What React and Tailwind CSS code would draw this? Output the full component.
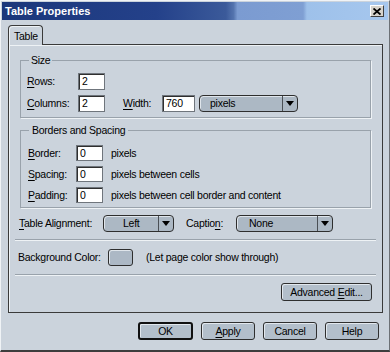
const U = ({ children }) => <span className="underline underline-offset-[2px]">{children}</span>;

const Input = ({ value, w = 'w-[27px]', h = 'h-[17px]' }) => (
  <div
    className={`${w} ${h} bg-white border border-[#6f757c] shadow-[inset_1px_1px_0_#2f2f2f] pl-[3px] flex items-center`}
  >
    {value}
  </div>
);

const Select = ({ value, w, pl }) => (
  <div
    className={`${w} h-[17px] flex rounded-[4px] border border-[#2e2e2e] bg-[#acb8c4] shadow-[inset_1px_1px_0_#dfe5eb]`}
  >
    <div className={`flex-1 flex items-center ${pl}`}>{value}</div>
    <div className="w-[15px] border-l border-[#4a4f55] flex items-center justify-center">
      <div className="w-0 h-0 border-x-[4px] border-x-transparent border-t-[5px] border-t-black" />
    </div>
  </div>
);

const Button = ({ children, w = 'w-[54px]', primary }) => (
  <div
    className={`${w} h-[18px] flex items-center justify-center rounded-[3px] bg-[#b3bfcb] shadow-[inset_1px_1px_0_#e2e8ee] ${
      primary ? 'border-2 border-[#111]' : 'border border-[#2f2f2f]'
    }`}
  >
    <span>{children}</span>
  </div>
);

const Separator = () => <div className="h-[2px] border-t border-[#99a2ab] border-b border-b-[#eef2f5]" />;

export default function App() {
  return (
    <div className="w-[390px] h-[352px] bg-[#cbd3dc] font-['Liberation_Sans',Arial,sans-serif] text-[10.5px] tracking-[-0.25px] leading-[13px] text-black whitespace-nowrap border-l border-t border-[#f0f3f6] border-r border-r-[#6c7075] border-b-2 border-b-[#3d3d3d] flex flex-col">
      {/* title bar */}
      <div className="mx-px mt-px h-[18px] flex items-center justify-between pl-[3px] pr-[4px] bg-[linear-gradient(90deg,#1b377b_0%,#24418a_40%,#3b5a9a_58%,#5474ae_60%,#7b9bd1_61%,#7f9fd3_78%,#9ec1ea_79%,#a6c7ee_100%)]">
        <span className="text-white font-bold text-[11px] tracking-normal">Table Properties</span>
        <div className="w-[14px] h-[12px] bg-[#d6d3cc] border border-t-white border-l-white border-b-[#404040] border-r-[#404040] flex items-center justify-center">
          <svg width="8" height="7" viewBox="0 0 8 7">
            <path d="M0.5 0.5 L7.5 6.5 M7.5 0.5 L0.5 6.5" stroke="#000" strokeWidth="1.8" />
          </svg>
        </div>
      </div>

      <div className="px-[7px] pt-[5px]">
        {/* tab */}
        <div className="relative z-10 -mb-px w-[35px] h-[20px] rounded-t-[4px] border border-b-0 border-[#3a3a3a] bg-[#cbd3dc] shadow-[inset_1px_1px_0_#eef2f5] pl-[5px] pt-[4px]">
          Table
        </div>

        {/* panel */}
        <div className="w-[375px] h-[269px] border border-[#3a3a3a] shadow-[inset_1px_1px_0_#eef2f5] flex flex-col">
          <fieldset className="mx-[11px] mt-[9px] border border-[#99a2ab] shadow-[1px_1px_0_#eef2f5] pl-[6px] pt-[6px] pb-[5px] flex flex-col gap-[5px]">
            <legend className="ml-[2px] px-[2px]">Size</legend>
            <div className="flex items-center">
              <span className="w-[51px]"><U>R</U>ows:</span>
              <Input value="2" />
            </div>
            <div className="flex items-center">
              <span className="w-[51px]"><U>C</U>olumns:</span>
              <Input value="2" />
              <span className="ml-[18px] w-[39px]"><U>W</U>idth:</span>
              <Input value="760" w="w-[33px]" />
              <div className="ml-[4px]">
                <Select value="pixels" w="w-[99px]" pl="pl-[10px]" />
              </div>
            </div>
          </fieldset>

          <fieldset className="mx-[11px] mt-[6px] border border-[#99a2ab] shadow-[1px_1px_0_#eef2f5] pl-[7px] pt-[8px] pb-[4px] flex flex-col gap-[5px]">
            <legend className="ml-[1px] px-[3px]">Borders and Spacing</legend>
            <div className="flex items-center">
              <span className="w-[48px]"><U>B</U>order:</span>
              <Input value="0" h="h-[16px]" />
              <span className="ml-[8px]">pixels</span>
            </div>
            <div className="flex items-center">
              <span className="w-[48px]"><U>S</U>pacing:</span>
              <Input value="0" h="h-[16px]" />
              <span className="ml-[8px]">pixels between cells</span>
            </div>
            <div className="flex items-center">
              <span className="w-[48px]"><U>P</U>adding:</span>
              <Input value="0" h="h-[16px]" />
              <span className="ml-[8px]">pixels between cell border and content</span>
            </div>
          </fieldset>

          <div className="mt-[7px] px-[10px] flex items-center">
            <span className="w-[84px]"><U>T</U>able Alignment:</span>
            <Select value="Left" w="w-[71px]" pl="pl-[19px]" />
            <span className="ml-[12px] w-[50px]">Captio<U>n</U>:</span>
            <Select value="None" w="w-[97px]" pl="pl-[12px]" />
          </div>

          <div className="mt-[7px] mx-[6px]">
            <Separator />
          </div>

          <div className="mt-[8px] px-[9px] flex items-center">
            <span className="w-[90px]">Background Color:</span>
            <div className="w-[25px] h-[17px] rounded-[3px] border border-[#2e2e2e] bg-[#acb8c5] shadow-[inset_1px_1px_0_#dfe5eb]" />
            <span className="ml-[13px]">(Let page color show through)</span>
          </div>

          <div className="mt-[8px] mx-[6px]">
            <Separator />
          </div>

          <div className="mt-[7px] pr-[10px] flex justify-end">
            <Button w="w-[91px]">
              Advanced <U>E</U>dit...
            </Button>
          </div>
        </div>
      </div>

      {/* bottom buttons */}
      <div className="mt-[9px] pr-[10px] flex justify-end gap-[8px]">
        <Button w="w-[55px]" primary>OK</Button>
        <Button><U>A</U>pply</Button>
        <Button>Cancel</Button>
        <Button>Help</Button>
      </div>
    </div>
  );
}
